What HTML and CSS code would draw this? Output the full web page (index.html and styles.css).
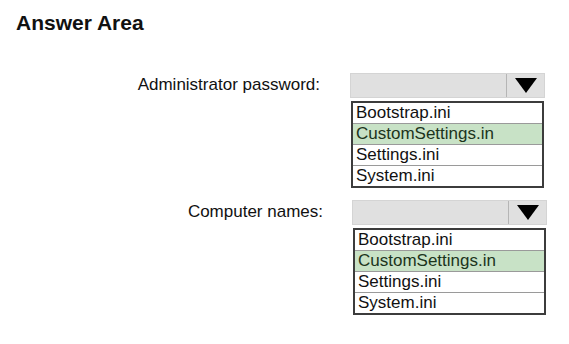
FILE: index.html
```
<!DOCTYPE html>
<html lang="en">
  <head>
    <meta charset="UTF-8" />
    <title>Answer Area</title>
    <link rel="stylesheet" href="styles.css">
  </head>
  <body>
    <div class="answer-area">
      <h1>Answer Area</h1>

      <div class="field">
        <div class="field-label">Administrator password:</div>
        <div class="dropdown">
          <div class="select-bar">
            <span class="select-value"></span>
            <span class="select-arrow">
              <svg width="22" height="15" viewBox="0 0 22 15"><polygon points="0,0 22,0 11,15" fill="#000"/></svg>
            </span>
          </div>
          <ul class="options">
            <li>Bootstrap.ini</li>
            <li class="selected">CustomSettings.in</li>
            <li>Settings.ini</li>
            <li>System.ini</li>
          </ul>
        </div>
      </div>

      <div class="field field-second">
        <div class="field-label">Computer names:</div>
        <div class="dropdown">
          <div class="select-bar">
            <span class="select-value"></span>
            <span class="select-arrow">
              <svg width="22" height="15" viewBox="0 0 22 15"><polygon points="0,0 22,0 11,15" fill="#000"/></svg>
            </span>
          </div>
          <ul class="options">
            <li>Bootstrap.ini</li>
            <li class="selected">CustomSettings.in</li>
            <li>Settings.ini</li>
            <li>System.ini</li>
          </ul>
        </div>
      </div>
    </div>
  </body>
</html>
```

FILE: styles.css
```
body {
  font-family: "Liberation Sans", Arial, sans-serif;
  background-color: #ffffff;
  color: #111;
  margin: 0;
  padding: 0;
}

.answer-area {
  padding: 11px 0 0 0;
}

h1 {
  font-size: 21px;
  line-height: 24px;
  font-weight: bold;
  margin: 0 0 38px 16px;
  color: #111;
}

.field {
  display: flex;
  align-items: flex-start;
}

.field-second {
  margin-top: 12px;
  padding-left: 2px;
}

.field-label {
  width: 320px;
  margin-right: 30px;
  text-align: right;
  font-size: 17px;
  line-height: 24px;
}

.field-second .field-label {
  width: 321px;
  margin-right: 29px;
}

.dropdown {
  width: 195px;
}

.select-bar {
  display: flex;
  height: 25px;
  background-color: #e0e0e0;
  border: 1px solid #d4d4d4;
  box-sizing: border-box;
}

.select-value {
  flex: 1;
}

.select-arrow {
  width: 37px;
  border-left: 1px solid #b5b5b5;
  display: flex;
  align-items: center;
  justify-content: center;
}

.options {
  list-style: none;
  margin: 3px 1px 0 1px;
  padding: 0;
  border: 2px solid #3c3c3c;
  background-color: #fff;
}

.options li {
  font-size: 17px;
  line-height: 20px;
  padding: 0 3px;
  border-bottom: 1px solid #9a9a9a;
}

.options li:last-child {
  border-bottom: none;
}

.options li.selected {
  background-color: #c8e2c6;
  color: #1c341c;
}
```
